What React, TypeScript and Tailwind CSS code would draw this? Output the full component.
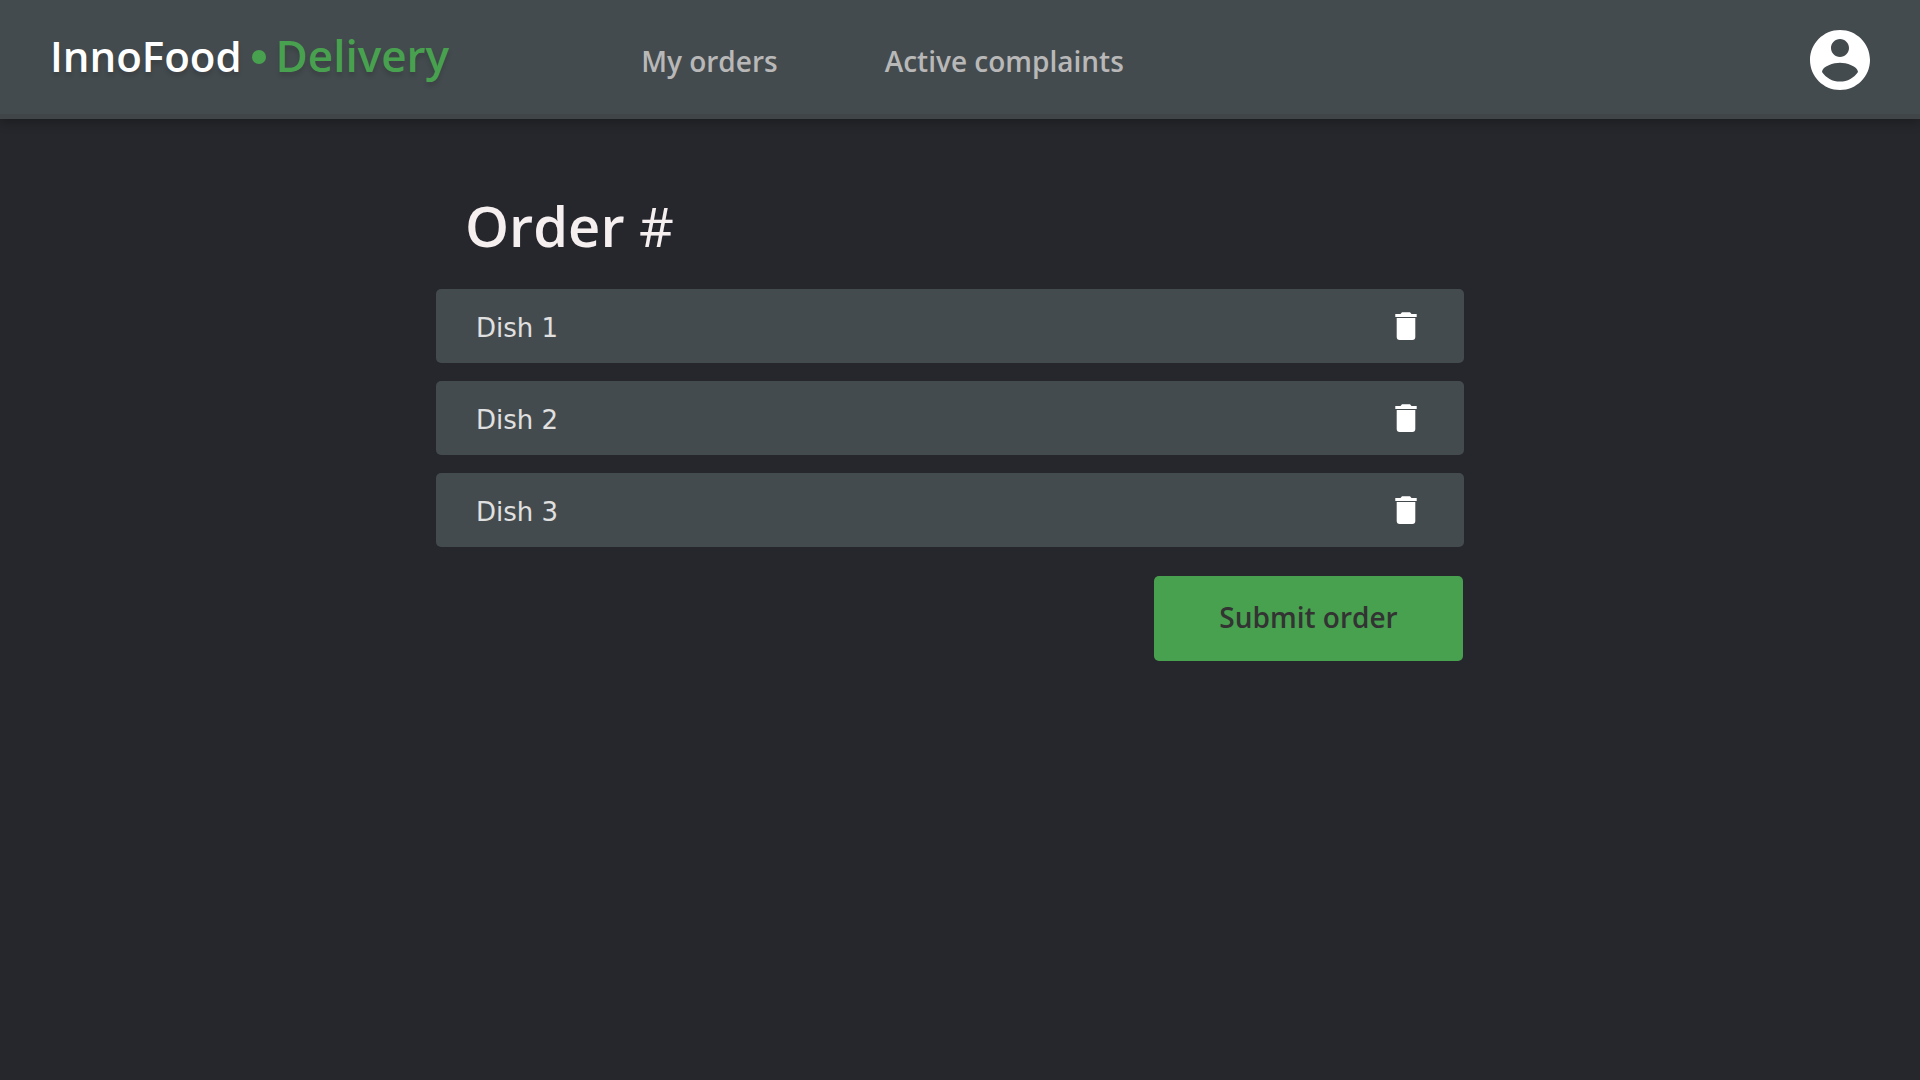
const dishes = ["Dish 1", "Dish 2", "Dish 3"];

function AccountIcon() {
  return (
    <svg viewBox="2 2 20 20" className="size-15" fill="#ffffff" aria-hidden="true">
      <path d="M12 2C6.48 2 2 6.48 2 12s4.48 10 10 10 10-4.48 10-10S17.52 2 12 2zm0 3c1.66 0 3 1.34 3 3s-1.34 3-3 3-3-1.34-3-3 1.34-3 3-3zm0 14.2c-2.5 0-4.71-1.28-6-3.22.03-1.99 4-3.08 6-3.08 1.99 0 5.97 1.09 6 3.08-1.29 1.94-3.5 3.22-6 3.22z" />
    </svg>
  );
}

function TrashIcon() {
  return (
    <svg viewBox="0 0 22 28" className="h-7 w-[22px]" fill="#ffffff" aria-hidden="true">
      <path d="M0.3 2h5.2L7 0.3h8L16.5 2h5.2v3H0.3z" />
      <path d="M1.7 6h18.6v19a3 3 0 0 1-3 3H4.7a3 3 0 0 1-3-3z" />
    </svg>
  );
}

export default function App() {
  return (
    <div className="flex min-h-screen flex-col bg-[#26272c] font-['Open_Sans',sans-serif]">
      <header className="flex h-[119px] items-center border-b-5 border-[#404648] bg-[#444b4e] px-[50px] shadow-[0_4px_10px_rgba(0,0,0,0.25)]">
        <a
          href="#"
          className="mb-1 flex items-baseline leading-[60px] font-semibold text-white text-shadow-[0_4px_4px_rgba(0,0,0,0.15)]"
        >
          <span className="text-[42px]">InnoFood</span>
          <span className="mx-2.5 mt-1 size-3.5 self-center rounded-full bg-[#48a14f]" />
          <span className="text-[44px] text-[#48a14f]">Delivery</span>
        </a>
        <nav className="ml-48 flex gap-[107px] pt-2 text-[28px] leading-10 font-semibold text-[#b9b8b8]">
          <a href="#orders">My orders</a>
          <a href="#complaints">Active complaints</a>
        </nav>
        <button type="button" aria-label="Account" className="mt-1.5 ml-auto">
          <AccountIcon />
        </button>
      </header>
      <main className="flex justify-center pt-[66px] pr-5">
        <div className="flex w-full max-w-[1028px] flex-col">
          <h1 className="h-20 pl-[29px] text-[56px] leading-20 font-semibold text-[#f6eff0]">
            Order <span className="text-[54px] font-medium">#</span>
          </h1>
          <ul className="mt-6 flex flex-col gap-[18px]">
            {dishes.map((dish) => (
              <li
                key={dish}
                className="flex h-[74px] items-center justify-between rounded-[5px] bg-[#444b4e] pr-[47px] pl-10 font-['DejaVu_Sans',sans-serif] text-[26px] text-[#e0e0e0]"
              >
                <span className="pt-1">{dish}</span>
                <button type="button" aria-label={`Remove ${dish}`}>
                  <TrashIcon />
                </button>
              </li>
            ))}
          </ul>
          <button
            type="button"
            className="mt-[29px] mr-px h-[85px] w-[309px] self-end rounded-[5px] bg-[#48a14f] pb-1 text-[28px] font-semibold text-[#333333]"
          >
            Submit order
          </button>
        </div>
      </main>
    </div>
  );
}
